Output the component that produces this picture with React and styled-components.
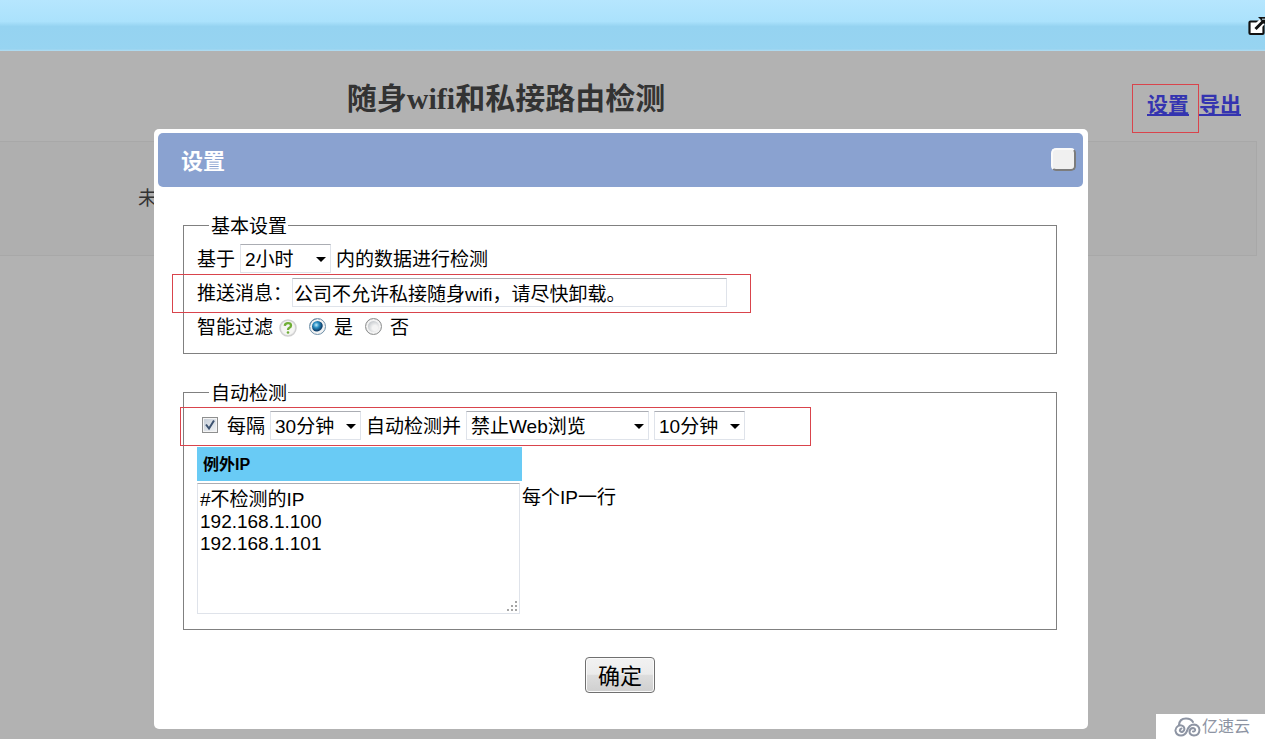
import React, { useState } from "react";
import styled, { createGlobalStyle, css } from "styled-components";

const sans = `"Liberation Sans", "Noto Sans CJK SC", sans-serif`;
const serif = `"Liberation Serif", "Noto Sans CJK SC", serif`;

const GlobalStyle = createGlobalStyle`
  *,
  *::before,
  *::after {
    box-sizing: border-box;
  }

  body {
    margin: 0;
    background: #b2b2b2;
    color: #000;
    font-family: ${sans};
    font-size: 19px;
    line-height: 26px;
  }

  input,
  select,
  textarea,
  button {
    margin: 0;
    color: inherit;
    font-family: inherit;
    font-size: inherit;
  }
`;

const Page = styled.div`
  display: flex;
  flex-direction: column;
  min-height: 100vh;
  overflow: hidden;
`;

const TopBar = styled.header`
  display: flex;
  align-items: center;
  justify-content: flex-end;
  height: 51px;
  overflow: hidden;
  background: linear-gradient(
    #b6e6fe 0%,
    #abe2fc 42%,
    #95d3f1 52%,
    #97d4f1 96%,
    #b4dcf0 100%
  );
`;

const PopOutButton = styled.button`
  flex: none;
  width: 20px;
  height: 20px;
  margin-right: -3px;
  padding: 0;
  border: none;
  background: none;
  cursor: pointer;

  svg {
    display: block;
  }
`;

const Main = styled.main`
  position: relative;
  flex: 1;
`;

const PageHead = styled.div`
  display: grid;
  grid-template-columns: 4fr 1fr;
  height: 90px;
`;

const PageTitle = styled.h1`
  margin: 0;
  padding-top: 28px;
  color: #333;
  font-family: ${serif};
  font-size: 30px;
  line-height: 40px;
  text-align: center;
`;

const Actions = styled.nav`
  display: flex;
  justify-content: flex-end;
  align-items: flex-start;
  gap: 10px;
  padding: 41px 24px 0 0;
`;

// red frame drawn around the items the reader should look at
const marked = css`
  position: relative;

  &::after {
    content: "";
    position: absolute;
    z-index: 3;
    border: 1px solid #d9444c;
    pointer-events: none;
  }
`;

const ActionLink = styled.a`
  color: #3434b0;
  font-size: 21px;
  font-weight: bold;
  text-decoration: underline;
  text-decoration-thickness: 2px;
  text-underline-offset: 2px;

  ${({ $marked }) =>
    $marked &&
    css`
      ${marked}
      &::after {
        inset: -8px -10px -15px -15px;
      }
    `}
`;

const ResultPanel = styled.section`
  height: 115px;
  margin-right: 8px;
  padding: 44px 0 0 138px;
  border: 1px solid #a8a8a8;
  border-left: none;
  background: #afafaf;
  color: #333;
`;

const Overlay = styled.div`
  position: absolute;
  inset: 0;
  display: flex;
  justify-content: center;
  align-items: flex-start;
  padding: 78px 23px 10px 0;
`;

const Dialog = styled.div`
  width: 934px;
  max-width: 100%;
  padding: 4px 5px 36px 4px;
  border-radius: 5px;
  background: #fff;
`;

const DialogHead = styled.div`
  display: flex;
  justify-content: space-between;
  align-items: center;
  height: 54px;
  padding: 0 7px 0 23px;
  border-radius: 5px;
  background: #8aa2d0;
`;

const DialogTitle = styled.h2`
  margin: 0;
  padding-top: 4px;
  color: #fff;
  font-size: 22px;
  line-height: 30px;
`;

const CloseButton = styled.button`
  width: 25px;
  height: 23px;
  margin-bottom: 2px;
  padding: 0;
  border: 2px solid;
  border-color: #fafafa #7c7c7c #7c7c7c #fafafa;
  border-radius: 5px;
  background: #f0f0f0;
  cursor: pointer;
`;

const Form = styled.form`
  display: flex;
  flex-direction: column;
  gap: 25px;
  padding: 25px 26px 0 25px;
`;

const Group = styled.fieldset`
  min-width: 0;
  margin: 0;
  padding: 4px 13px ${({ $bottom }) => $bottom}px;
  border: 1px solid #808080;
`;

const GroupTitle = styled.legend`
  margin-left: 12px;
  padding: 3px 1px 0 2px;
  line-height: 23px;
`;

const Row = styled.div`
  display: flex;
  align-items: center;
  gap: ${({ $gap = 5 }) => $gap}px;
  height: 34px;
  padding-top: 2px;

  ${({ $frame }) =>
    $frame &&
    css`
      ${marked}
      &::after {
        top: -2px;
        left: -${$frame.left}px;
        width: ${$frame.width}px;
        height: 39px;
      }
    `}
`;

const fieldBorder = css`
  border: 1px solid #dfe3ea;
  border-top-color: #abadb3;
  border-radius: 0;
  background: #fff;
  outline: none;
`;

const SelectBox = styled.span`
  position: relative;
  display: flex;
  width: ${({ $width }) => $width}px;
  margin-bottom: 4px;

  &::after {
    content: "";
    position: absolute;
    top: 13px;
    right: 5px;
    border: 5px solid transparent;
    border-top-color: #000;
    border-bottom: none;
    pointer-events: none;
  }
`;

const NativeSelect = styled.select`
  ${fieldBorder}
  width: 100%;
  height: 29px;
  padding: 2px 16px 0 4px;
  appearance: none;
`;

const MessageInput = styled.input`
  ${fieldBorder}
  width: 435px;
  height: 29px;
  margin-bottom: 4px;
  padding: 0 1px;
`;

const HelpIcon = styled.svg`
  flex: none;
  margin-left: 1px;
`;

const SmartLabel = styled.span`
  display: flex;
  align-items: center;
  gap: 5px;
`;

const RadioLabel = styled.label`
  display: flex;
  align-items: center;
  gap: 8px;
`;

const Radio = styled.input`
  appearance: none;
  width: 17px;
  height: 17px;
  margin-bottom: 4px;
  border: 1px solid #8e8f8f;
  border-radius: 50%;
  background: radial-gradient(circle at 60% 60%, #f4f4f4 20%, #c4c8cc 60%);
  box-shadow: inset 0 0 0 2px #f2f2f2;

  &:checked {
    border-color: #6f8fa8;
    background: radial-gradient(
      circle at 42% 40%,
      #c4ecfa 0%,
      #2a8fc4 22%,
      #0d3b66 48%,
      #e8f0f5 56%
    );
  }
`;

const CheckLabel = styled.label`
  display: flex;
  align-items: center;
  gap: 9px;
  padding-left: 5px;
`;

const CheckBox = styled.span`
  position: relative;
  display: flex;
  margin-bottom: 4px;

  svg {
    position: absolute;
    inset: 0;
    pointer-events: none;
  }

  input {
    appearance: none;
    width: 16px;
    height: 16px;
    border: 1px solid #8e8f8f;
    background: linear-gradient(135deg, #c3cbd6, #f3f5f7);
    box-shadow: inset 0 0 0 1px #f4f4f4;
  }

  input:not(:checked) + svg {
    display: none;
  }
`;

const ListHead = styled.label`
  display: block;
  width: 325px;
  max-width: 100%;
  margin: 4px 0 2px;
  padding: 5px 6px 3px;
  background: #69cbf5;
  font-size: 16px;
  font-weight: bold;
`;

const ListRow = styled.div`
  display: flex;
  align-items: flex-start;
  gap: 2px;
`;

const IpList = styled.textarea`
  ${fieldBorder}
  width: 323px;
  height: 131px;
  padding: 5px 2px;
  line-height: 22px;
  resize: none;
`;

const ListBox = styled.div`
  position: relative;
  display: flex;

  svg {
    position: absolute;
    right: 2px;
    bottom: 2px;
    pointer-events: none;
  }
`;

const ListHint = styled.span`
  padding-top: 2px;
`;

const Submit = styled.button`
  align-self: center;
  height: 36px;
  margin-top: 2px;
  padding: 3px 12px 0;
  border: 1px solid #707070;
  border-radius: 4px;
  background: linear-gradient(#f2f2f2 0%, #ebebeb 48%, #dddddd 50%, #cfcfcf 100%);
  box-shadow: inset 0 0 0 1px #fafafa;
  font-size: 22px;
  line-height: 30px;
  cursor: pointer;
`;

const Brand = styled.div`
  position: absolute;
  right: 0;
  bottom: 0;
  display: flex;
  align-items: center;
  gap: 1px;
  width: 109px;
  height: 25px;
  padding-left: 18px;
  background: #fff;
  color: #8d94a3;
  font-size: 16px;
`;

const Select = ({ label, options, width }) => {
  const [value, setValue] = useState(options[0]);

  return (
    <SelectBox $width={width}>
      <NativeSelect
        aria-label={label}
        value={value}
        onChange={(e) => setValue(e.target.value)}
      >
        {options.map((option) => (
          <option key={option}>{option}</option>
        ))}
      </NativeSelect>
    </SelectBox>
  );
};

const PopOutIcon = () => (
  <svg width="20" height="20" viewBox="0 0 20 20" aria-hidden="true">
    <rect
      x="1.500"
      y="5.500"
      width="14"
      height="12.500"
      rx="1"
      fill="#fff"
      stroke="#111"
      strokeWidth="2.200"
    />
    <path d="M7.500 12.500L14 6" stroke="#fff" strokeWidth="7" />
    <path d="M7.500 13L15 5.500" stroke="#111" strokeWidth="3" />
    <path d="M10 1H20V11L17 8L14 5Z" fill="#111" />
    <path d="M14 3.200H18V7" fill="none" stroke="#cfe9f5" strokeWidth="1" />
  </svg>
);

const Help = () => (
  <HelpIcon width="18" height="18" viewBox="0 0 18 18" aria-hidden="true">
    <circle cx="9" cy="9" r="8" fill="#eee" stroke="#d0d0d0" strokeWidth="1.500" />
    <circle cx="9" cy="9" r="6.500" fill="#f6f6f4" />
    <path
      d="M5.800 6.800Q6 4.200 9 4.200Q12 4.200 12 6.500Q12 8 10.400 8.800Q9 9.500 9 11"
      fill="none"
      stroke="#6fae35"
      strokeWidth="2.300"
    />
    <circle cx="9" cy="13.500" r="1.300" fill="#6fae35" />
  </HelpIcon>
);

const Grip = () => (
  <svg width="11" height="11" viewBox="0 0 11 11" fill="#a5a5a5" aria-hidden="true">
    <path d="M8 0h2v2h-2zM4 4h2v2h-2zM8 4h2v2h-2zM0 8h2v2h-2zM4 8h2v2h-2zM8 8h2v2h-2z" />
  </svg>
);

const CloudLogo = () => (
  <svg
    width="27"
    height="20"
    viewBox="0 0 27 20"
    fill="none"
    stroke="#8d94a3"
    strokeWidth="2"
    strokeLinecap="round"
    aria-hidden="true"
  >
    <path d="M5 8Q5.500 1.500 12 1.500Q17 1.500 19 5" />
    <path d="M7.500 11.500Q5.500 12 6 14Q7 15.500 9 14.500Q11.500 12.500 9.500 9.500Q7 7.300 4 9Q1 11 1.500 14Q2.500 18.500 7 18.500Q11 18.500 13 14Q15 7.500 20 7.500Q25 8 25.500 13Q25 18.500 20 18.500Q15.500 18 15.500 14.500Q16 11 19 11Q21.500 11.500 21 13.500Q20.500 14.800 19 14.500" />
  </svg>
);

const App = () => {
  const [message, setMessage] = useState(
    "公司不允许私接随身wifi，请尽快卸载。"
  );
  const [filter, setFilter] = useState("yes");
  const [auto, setAuto] = useState(true);
  const [ips, setIps] = useState("#不检测的IP\n192.168.1.100\n192.168.1.101");

  return (
    <Page>
      <GlobalStyle />
      <TopBar>
        <PopOutButton type="button" aria-label="弹出">
          <PopOutIcon />
        </PopOutButton>
      </TopBar>

      <Main>
        <PageHead>
          <PageTitle>随身wifi和私接路由检测</PageTitle>
          <Actions>
            <ActionLink href="#settings" $marked>
              设置
            </ActionLink>
            <ActionLink href="#export">导出</ActionLink>
          </Actions>
        </PageHead>
        <ResultPanel>未</ResultPanel>

        <Overlay>
          <Dialog role="dialog" aria-labelledby="dialog-title">
            <DialogHead>
              <DialogTitle id="dialog-title">设置</DialogTitle>
              <CloseButton type="button" aria-label="关闭" />
            </DialogHead>

            <Form onSubmit={(e) => e.preventDefault()}>
              <Group $bottom={9}>
                <GroupTitle>基本设置</GroupTitle>
                <Row>
                  基于
                  <Select
                    label="数据时间"
                    width={91}
                    options={["2小时", "4小时", "8小时"]}
                  />
                  内的数据进行检测
                </Row>
                <Row $gap={0} $frame={{ left: 25, width: 579 }}>
                  <label htmlFor="message">推送消息：</label>
                  <MessageInput
                    id="message"
                    value={message}
                    onChange={(e) => setMessage(e.target.value)}
                  />
                </Row>
                <Row $gap={12}>
                  <SmartLabel>
                    智能过滤
                    <Help />
                  </SmartLabel>
                  <RadioLabel>
                    <Radio
                      type="radio"
                      name="filter"
                      checked={filter === "yes"}
                      onChange={() => setFilter("yes")}
                    />
                    是
                  </RadioLabel>
                  <RadioLabel>
                    <Radio
                      type="radio"
                      name="filter"
                      checked={filter === "no"}
                      onChange={() => setFilter("no")}
                    />
                    否
                  </RadioLabel>
                </Row>
              </Group>

              <Group $bottom={15}>
                <GroupTitle>自动检测</GroupTitle>
                <Row $frame={{ left: 17, width: 631 }}>
                  <CheckLabel>
                    <CheckBox>
                      <input
                        type="checkbox"
                        checked={auto}
                        onChange={(e) => setAuto(e.target.checked)}
                      />
                      <svg width="16" height="16" viewBox="0 0 16 16">
                        <path
                          d="M4 7.500L7 11.500L12 3.500"
                          fill="none"
                          stroke="#3c5270"
                          strokeWidth="2"
                        />
                      </svg>
                    </CheckBox>
                    每隔
                  </CheckLabel>
                  <Select
                    label="检测间隔"
                    width={91}
                    options={["30分钟", "60分钟"]}
                  />
                  自动检测并
                  <Select
                    label="处理方式"
                    width={183}
                    options={["禁止Web浏览", "仅推送消息"]}
                  />
                  <Select
                    label="禁止时长"
                    width={91}
                    options={["10分钟", "30分钟"]}
                  />
                </Row>
                <ListHead htmlFor="ips">例外IP</ListHead>
                <ListRow>
                  <ListBox>
                    <IpList
                      id="ips"
                      value={ips}
                      onChange={(e) => setIps(e.target.value)}
                    />
                    <Grip />
                  </ListBox>
                  <ListHint>每个IP一行</ListHint>
                </ListRow>
              </Group>

              <Submit type="submit">确定</Submit>
            </Form>
          </Dialog>
        </Overlay>

        <Brand>
          <CloudLogo />
          亿速云
        </Brand>
      </Main>
    </Page>
  );
};

export default App;
